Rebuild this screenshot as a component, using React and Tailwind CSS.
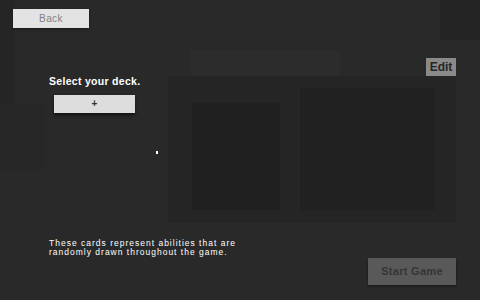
const font = { fontFamily: '"Liberation Sans", Arial, sans-serif' }

export default function App() {
  return (
    <div
      className="relative w-[480px] h-[300px] overflow-hidden bg-[#292929] text-white"
      style={font}
    >
      {/* faint background blocks */}
      <div className="absolute left-0 top-0 w-[14px] h-[170px] bg-[#252525]" />
      <div className="absolute left-[440px] top-0 w-[40px] h-[40px] bg-[#242424]" />
      <div className="absolute left-[190px] top-[50px] w-[150px] h-[25px] bg-[#2c2c2c]" />
      <div className="absolute left-[0px] top-[105px] w-[45px] h-[65px] bg-[#272727]" />

      <div className="relative flex flex-col">
        <button className="ml-[13px] mt-[9px] w-[76px] h-[19px] bg-[#e3e3e3] text-[#828282] text-[10px] leading-none tracking-[0.4px] shadow-[0_1px_2px_rgba(0,0,0,0.5)]">
          Back
        </button>

        <div className="flex">
          <div className="w-[168px] pl-[49px] flex flex-col">
            <div className="mt-[47px] text-[10.5px] leading-[12px] font-bold tracking-[0.3px] whitespace-nowrap">
              Select your deck.
            </div>
            <button className="ml-[5px] mt-[8px] w-[81px] h-[18px] bg-[#dddddd] text-[#333] text-[10px] leading-none font-bold shadow-[0_2px_3px_rgba(0,0,0,0.6)]">
              +
            </button>
            <div className="mt-[126px] text-[8.5px] leading-[9px] tracking-[1px] whitespace-nowrap">
              <div>These cards represent abilities that are</div>
              <div>randomly drawn throughout the game.</div>
            </div>
          </div>

          <div className="w-[288px] flex flex-col">
            <button className="self-end mt-[30px] w-[30px] h-[18px] bg-[#8a8a8a] text-[#262626] text-[12px] leading-none font-bold">
              Edit
            </button>
            <div className="h-[147px] bg-[#252525] flex items-end gap-[20px] pl-[24px] pb-[13px]">
              <div className="w-[88px] h-[107px] bg-[#202020]" />
              <div className="w-[135px] h-[122px] bg-[#212121]" />
            </div>
            <button className="self-end mt-[35px] w-[88px] h-[27px] bg-[#595959] text-[#353535] text-[11px] leading-none font-bold tracking-[0.3px] shadow-[0_1px_2px_rgba(0,0,0,0.5)]">
              Start Game
            </button>
          </div>
        </div>
      </div>

      {/* mouse cursor */}
      <div className="absolute left-[156px] top-[151px] w-[2px] h-[3px] bg-white" />
    </div>
  )
}
